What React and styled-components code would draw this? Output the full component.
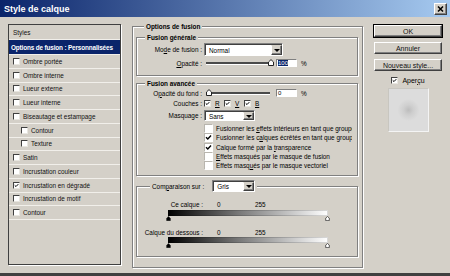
import React from 'react';
import styled, { createGlobalStyle } from 'styled-components';

const GlobalStyle = createGlobalStyle`
  html, body {
    margin: 0;
    padding: 0;
    background: #d4d0c8;
  }
  body {
    font-family: "Liberation Sans", Arial, sans-serif;
    font-size: 6.4px;
    color: #000;
  }
`;

const Window = styled.div`
  width: 450px;
  height: 276px;
  box-sizing: border-box;
  background: #d4d0c8;
  display: flex;
  flex-direction: column;
  overflow: hidden;
  border-bottom: 3px solid #404040;
`;

const TitleBar = styled.div`
  height: 17px;
  flex: none;
  background: linear-gradient(90deg, #0a246a 0%, #a6caf0 100%);
  display: flex;
  align-items: center;
  justify-content: space-between;
  padding: 0 3px 0 4px;
  margin-bottom: 1px;
`;

const Title = styled.span`
  color: #fff;
  font-weight: 700;
  font-size: 9px;
`;

const CloseButton = styled.div`
  width: 13px;
  height: 12px;
  box-sizing: border-box;
  background: #d4d0c8;
  border: 1px solid;
  border-color: #fff #404040 #404040 #fff;
  box-shadow: inset -1px -1px 0 #808080;
  display: flex;
  align-items: center;
  justify-content: center;
`;

const Body = styled.div`
  flex: 1;
  display: flex;
  padding-left: 8px;
`;

const StyleList = styled.div`
  width: 113px;
  height: 241px;
  margin-top: 6px;
  box-sizing: border-box;
  border: 1px solid #404040;
  box-shadow: 1px 1px 0 #fff;
  display: flex;
  flex-direction: column;
`;

const ListRow = styled.div`
  height: ${p => p.$h || 13.75}px;
  box-sizing: border-box;
  flex: none;
  display: flex;
  align-items: center;
  gap: 3px;
  padding-left: ${p => (p.$indent ? 12 : p.$selected ? 2 : 4)}px;
  border-bottom: 1px solid #f1efea;
  background: ${p => (p.$selected ? '#0a246a' : 'transparent')};
  color: ${p => (p.$selected ? '#fff' : '#111')};
  font-weight: ${p => (p.$selected ? 700 : 400)};
  letter-spacing: ${p => (p.$selected ? '-0.15px' : '0')};
  white-space: nowrap;
  overflow: hidden;
`;

const Box = styled.span`
  width: ${p => p.$size}px;
  height: ${p => p.$size}px;
  flex: none;
  box-sizing: border-box;
  background: #fff;
  border: 1px solid;
  border-color: ${p => (p.$light ? '#b8b5ae #fff #fff #b8b5ae' : '#404040 #e8e6e0 #e8e6e0 #404040')};
  display: flex;
  align-items: center;
  justify-content: center;
`;

const Check = ({ size = 7, checked, light }) => (
  <Box $size={size} $light={light}>
    {checked && (
      <svg width={size - 2} height={size - 2} viewBox="0 0 7 7">
        <path d="M1 3.2 L2.8 5 L6 1.6" fill="none" stroke="#000" strokeWidth="1.4" />
      </svg>
    )}
  </Box>
);

const Group = styled.div`
  box-sizing: border-box;
  border: 1px solid #808080;
  box-shadow: inset 1px 1px 0 #fff, 1px 1px 0 #fff;
  display: flex;
  flex-direction: column;
  flex: none;
  height: ${p => p.$h}px;
  margin-top: ${p => p.$mt || 0}px;
`;

const MainGroup = styled(Group)`
  width: 231px;
  margin-left: 11px;
  margin-top: 8px;
  padding: 0 4px 0 3px;
`;

const Legend = styled.div`
  align-self: flex-start;
  display: flex;
  align-items: center;
  gap: 8px;
  height: ${p => p.$lh || 8}px;
  margin-top: ${p => -Math.ceil((p.$lh || 8) / 2) - 1}px;
  margin-left: ${p => p.$indent || 8}px;
  padding: 0 2px;
  background: #d4d0c8;
  font-weight: ${p => (p.$bold ? 700 : 400)};
  white-space: nowrap;
`;

const FormRow = styled.div`
  display: flex;
  align-items: center;
  height: ${p => p.$h}px;
  margin-top: ${p => p.$mt || 0}px;
  flex: none;
`;

const Label = styled.span`
  width: ${p => p.$w || 65}px;
  flex: none;
  text-align: right;
  margin-right: 2px;
  white-space: nowrap;
`;

const SelectBox = styled.div`
  width: ${p => p.$w}px;
  height: ${p => p.$h}px;
  box-sizing: border-box;
  background: #fff;
  border: 1px solid;
  border-color: #808080 #fff #fff #808080;
  box-shadow: inset 1px 1px 0 #404040;
  display: flex;
  align-items: stretch;
  padding: 1px 0 0 1px;
`;

const SelectText = styled.span`
  flex: 1;
  padding-left: 3px;
  display: flex;
  align-items: center;
`;

const DropButton = styled.span`
  width: ${p => p.$w || 11}px;
  box-sizing: border-box;
  background: #d4d0c8;
  border: 1px solid;
  border-color: #d4d0c8 #404040 #404040 #fff;
  box-shadow: inset -1px -1px 0 #808080;
  display: flex;
  align-items: center;
  justify-content: center;
  &::after {
    content: '';
    border-left: 3px solid transparent;
    border-right: 3px solid transparent;
    border-top: 3px solid #000;
  }
`;

const Select = ({ w, h, value }) => (
  <SelectBox $w={w} $h={h}>
    <SelectText>{value}</SelectText>
    <DropButton />
  </SelectBox>
);

const Slider = styled.div`
  position: relative;
  width: 68px;
  height: 8px;
  margin-left: 1px;
  display: flex;
  align-items: center;
`;

const Track = styled.div`
  width: 64px;
  margin-left: 1px;
  height: 2px;
  background: #4a4a4a;
  box-shadow: 0 1px 0 #fff;
`;

const Thumb = styled.span`
  position: absolute;
  top: 0;
  left: ${p => p.$left}px;
`;

const ThumbShape = ({ fill = '#fff', w = 6, h = 7 }) => (
  <svg width={w} height={h} viewBox="0 0 6 7" style={{ display: 'block' }}>
    <path d="M0.5 6.5 V3 L3 0.6 L5.5 3 V6.5 Z" fill={fill} stroke="#222" strokeWidth="1" />
  </svg>
);

const NumberField = styled.div`
  width: 21px;
  height: 8px;
  margin-left: 3px;
  box-sizing: border-box;
  background: #fff;
  border: 1px solid;
  border-color: #808080 #fff #fff #808080;
  display: flex;
  align-items: center;
  padding-left: 1px;
  font-size: 6px;
`;

const Selected = styled.span`
  background: #0a246a;
  color: #fff;
  line-height: 6px;
`;

const Percent = styled.span`
  margin-left: 4px;
`;

const Channel = styled.span`
  width: 20px;
  display: flex;
  align-items: center;
  gap: 4px;
  text-decoration: underline;
`;

const CheckList = styled.div`
  margin: 3px 0 0 67px;
  width: 148px;
  overflow: hidden;
  display: flex;
  flex-direction: column;
`;

const CheckItem = styled.div`
  height: 9.3px;
  display: flex;
  align-items: center;
  gap: 3px;
  white-space: nowrap;
`;

const Values = styled.span`
  display: flex;
  margin-left: 12px;
  span:first-child { width: 38px; }
`;

const GradientBar = styled.div`
  width: 160px;
  height: 6px;
  margin: ${p => p.$mt}px 0 0 31px;
  background: linear-gradient(90deg, #000 0%, #7a7a7a 45%, #fff 100%);
  box-shadow: inset 0 0 0 1px rgba(0,0,0,0.15);
  flex: none;
`;

const ThumbRow = styled.div`
  width: 164px;
  margin-left: 29px;
  display: flex;
  justify-content: space-between;
  flex: none;
`;

const Side = styled.div`
  width: 68px;
  margin-left: 11px;
  margin-top: 7px;
  display: flex;
  flex-direction: column;
  align-items: center;
  gap: 5px;
`;

const Button = styled.div`
  width: 68px;
  height: 12px;
  box-sizing: border-box;
  background: #d4d0c8;
  border: 1px solid;
  border-color: #fff #404040 #404040 #fff;
  box-shadow: inset -1px -1px 0 #808080${p => (p.$default ? ', 0 0 0 1px #000' : '')};
  display: flex;
  align-items: center;
  justify-content: center;
  font-size: 7px;
  color: #111;
`;

const PreviewToggle = styled.div`
  display: flex;
  align-items: center;
  gap: 4px;
  height: 8px;
  font-size: 7px;
`;

const Preview = styled.div`
  width: 41px;
  height: 44px;
  margin-top: -1px;
  box-sizing: border-box;
  border: 1px solid;
  border-color: #c8c6c0 #f4f4f4 #f4f4f4 #c8c6c0;
  background: radial-gradient(circle at 50% 50%, #bdbdbd 0px, #cfcfcf 5px, #dcdcdc 11px);
`;

const styles = [
  { name: 'Ombre portée' },
  { name: 'Ombre interne' },
  { name: 'Lueur externe' },
  { name: 'Lueur interne' },
  { name: 'Biseautage et estampage' },
  { name: 'Contour', indent: true },
  { name: 'Texture', indent: true },
  { name: 'Satin' },
  { name: 'Incrustation couleur' },
  { name: 'Incrustation en dégradé', checked: true },
  { name: 'Incrustation de motif' },
  { name: 'Contour' },
];

const advanced = [
  { text: <>Fusionner les <u>e</u>ffets intérieurs en tant que groupe</> },
  { text: <>Fusionner les c<u>a</u>lques écrêtés en tant que groupe</>, checked: true },
  { text: <>Calque formé par la <u>t</u>ransparence</>, checked: true },
  { text: <><u>E</u>ffets masqués par le masque de fusion</> },
  { text: <>Effets masq<u>u</u>és par le masque vectoriel</> },
];

export default function App() {
  return (
    <Window>
      <GlobalStyle />
      <TitleBar>
        <Title>Style de calque</Title>
        <CloseButton>
          <svg width="7" height="6" viewBox="0 0 7 6">
            <path d="M1 0.5 L6 5.5 M6 0.5 L1 5.5" stroke="#000" strokeWidth="1.5" />
          </svg>
        </CloseButton>
      </TitleBar>
      <Body>
        <StyleList>
          <ListRow $h={15}>Styles</ListRow>
          <ListRow $h={15} $selected>Options de fusion : Personnalisées</ListRow>
          {styles.map((s, i) => (
            <ListRow key={i} $indent={s.indent}>
              <Check checked={s.checked} />
              {s.name}
            </ListRow>
          ))}
        </StyleList>

        <MainGroup $h={242}>
          <Legend $bold $indent={8}>Options de fusion</Legend>

          <Group $h={39} $mt={7}>
            <Legend $bold $indent={8}>Fusion générale</Legend>
            <FormRow $h={13} $mt={2}>
              <Label>Mo<u>d</u>e de fusion :</Label>
              <Select w={79} h={13} value="Normal" />
            </FormRow>
            <FormRow $h={8} $mt={3}>
              <Label><u>O</u>pacité :</Label>
              <Slider>
                <Track />
                <Thumb $left={63}><ThumbShape /></Thumb>
              </Slider>
              <NumberField><Selected>100</Selected></NumberField>
              <Percent>%</Percent>
            </FormRow>
          </Group>

          <Group $h={93} $mt={7}>
            <Legend $bold $indent={8}>Fusion avancée</Legend>
            <FormRow $h={8} $mt={2}>
              <Label>O<u>p</u>acité du fond :</Label>
              <Slider>
                <Track />
                <Thumb $left={1}><ThumbShape /></Thumb>
              </Slider>
              <NumberField>0</NumberField>
              <Percent>%</Percent>
            </FormRow>
            <FormRow $h={7} $mt={3}>
              <Label>Couches :</Label>
              <Channel><Check checked />R</Channel>
              <Channel><Check checked />V</Channel>
              <Channel><Check checked />B</Channel>
            </FormRow>
            <FormRow $h={11} $mt={3}>
              <Label>Masquage :</Label>
              <Select w={51} h={11} value="Sans" />
            </FormRow>
            <CheckList>
              {advanced.map((a, i) => (
                <CheckItem key={i}>
                  <Check size={9} light checked={a.checked} />
                  <span>{a.text}</span>
                </CheckItem>
              ))}
            </CheckList>
          </Group>

          <Group $h={71} $mt={10}>
            <Legend $lh={12} $indent={13}>
              <span>Com<u>p</u>araison sur :</span>
              <Select w={43} h={12} value="Gris" />
            </Legend>
            <FormRow $h={8} $mt={8}>
              <Label $w={66}>Ce calque :</Label>
              <Values><span>0</span><span>255</span></Values>
            </FormRow>
            <GradientBar $mt={2} />
            <ThumbRow>
              <ThumbShape fill="#000" w={5} h={5} />
              <ThumbShape fill="#fff" w={5} h={5} />
            </ThumbRow>
            <FormRow $h={8} $mt={7}>
              <Label $w={66}>Calque du dessous :</Label>
              <Values><span>0</span><span>255</span></Values>
            </FormRow>
            <GradientBar $mt={1} />
            <ThumbRow>
              <ThumbShape fill="#000" w={5} h={5} />
              <ThumbShape fill="#fff" w={5} h={5} />
            </ThumbRow>
          </Group>
        </MainGroup>

        <Side>
          <Button $default>OK</Button>
          <Button>Annuler</Button>
          <Button>No<u>u</u>veau style...</Button>
          <PreviewToggle>
            <Check checked />
            <span>Aper<u>ç</u>u</span>
          </PreviewToggle>
          <Preview />
        </Side>
      </Body>
    </Window>
  );
}
